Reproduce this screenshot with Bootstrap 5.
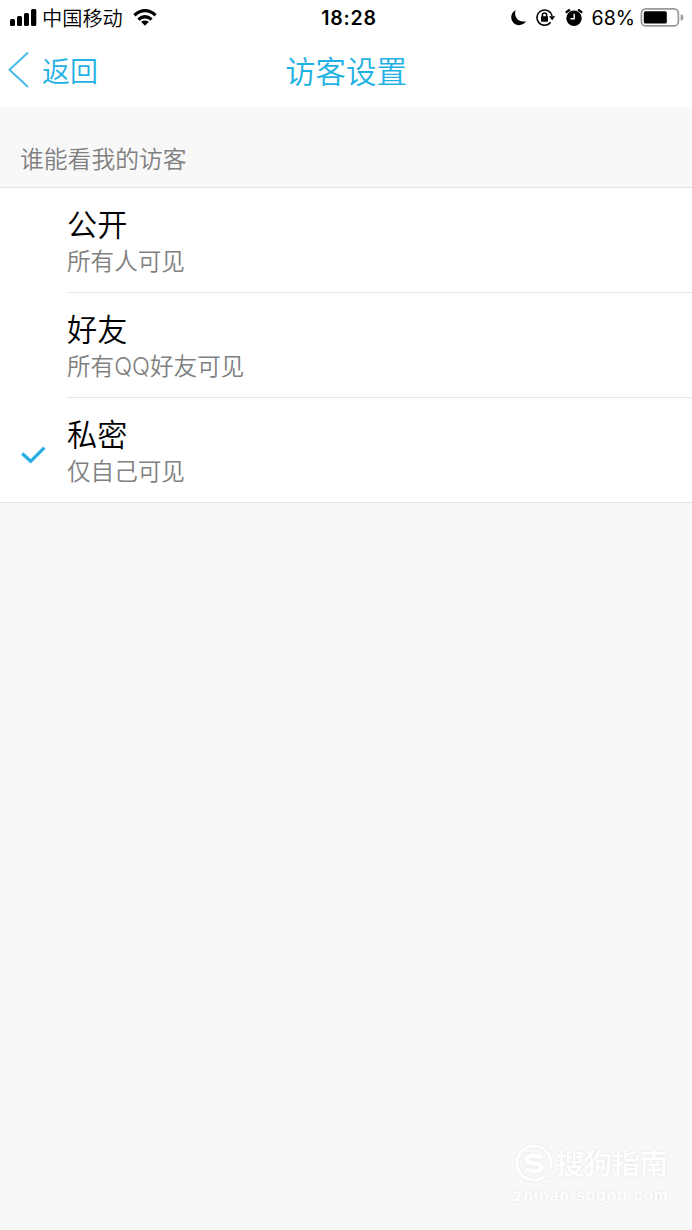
<!DOCTYPE html>
<html lang="zh-CN">
<head>
<meta charset="utf-8">
<meta name="viewport" content="width=device-width, initial-scale=1">
<title>访客设置</title>
<link href="https://cdn.jsdelivr.net/npm/bootstrap@5.3.0/dist/css/bootstrap.min.css" rel="stylesheet">
<style>
body{font-family:Inter,"Noto Sans CJK SC",sans-serif;background:#f8f8f8;color:#000;font-weight:350}
svg{display:block;flex:none}
.app{height:1230px;overflow:hidden}
.status{height:35px;font-size:20px;line-height:35px;font-weight:400}
.side{flex:1 1 0}
.carrier{font-size:20.2px;font-weight:350;margin-left:4px;margin-right:10px;padding-top:1px}
.clock{font-size:19.5px;font-weight:600;letter-spacing:.8px;margin-left:6px;padding-top:1px}
.percent{padding-top:1px;font-size:19.6px;margin-left:5px;margin-right:5px}
.titlebar{height:72px;line-height:72px;color:#1fb1e3}
.back{height:72px;font-size:28px;color:inherit}
.back span,.page-title{padding-top:1px}
.page-title{font-size:30.4px}
.section-label{height:81px;padding:37px 0 0 20px;font-size:23.8px;line-height:32px;color:#808080;border-bottom:1px solid #e2e2e2}
.options{border-bottom:1px solid #e2e2e2}
.option{--bs-list-group-item-padding-x:0;height:105px;color:#000}
.option:last-child{height:104px}
.tick{width:67px;padding-left:21px;padding-top:10px}
.option-text{padding-top:19px;border-bottom:1px solid #e5e5e5}
.option:last-child .option-text{border:0}
.option-name{font-size:30.2px;line-height:36px}
.option-note{font-size:23.6px;line-height:32px;padding-top:3px;color:#808080}
.brand{color:#fff;width:156px;margin-right:22px;margin-bottom:23px;filter:drop-shadow(0 0 1px #e3e3e3)}
.brand-name{font-size:28px;line-height:42px;font-weight:500;margin-left:2px}
.brand-url{font-size:15.5px;line-height:22px;font-weight:600;letter-spacing:1px}
</style>
</head>
<body>
<div class="app d-flex flex-column">
  <header class="bg-white">
    <div class="status d-flex align-items-center text-nowrap">
      <div class="side d-flex align-items-center">
        <svg class="ms-2" width="30" height="20" viewBox="0 0 30 20"><g fill="#000"><rect x="2" y="11" width="5" height="7" rx="1.5"/><rect x="9" y="8" width="5" height="10" rx="1.5"/><rect x="16" y="5" width="5" height="13" rx="1.5"/><rect x="23" y="1" width="5.3" height="17" rx="1.5"/></g></svg>
        <span class="carrier">中国移动</span>
        <svg width="24" height="18" viewBox="0 0 24 18"><g fill="none" stroke="#000" stroke-width="3.2"><path d="M1.4 6.3Q12-2.9 22.6 6.3"/><path d="M5.4 10.5Q12 5 18.6 10.5"/></g><path d="M8.1 12.8Q12 10.2 15.9 12.8L12 16.8Z"/></svg>
      </div>
      <span class="clock">18:28</span>
      <div class="side d-flex align-items-center justify-content-end">
        <svg width="17" height="18" viewBox="0 0 17 18"><path d="M5.6 1.2A7.9 7.9 0 1 0 16 12.2C9.5 14.2 3.2 8.6 5.6 1.2Z"/></svg>
        <svg class="ms-2" width="22" height="20" viewBox="0 0 22 20"><g fill="none" stroke="#000" stroke-width="1.5"><path d="M15.6 14.2A7.6 7.6 0 1 1 17.1 8.4"/><path d="M7.4 9V7.2a2.1 2.1 0 0 1 4.2 0v2"/></g><rect x="6" y="8.3" width="7" height="5.4" rx=".7"/><path d="M14 8.3H20.2L17.1 12.2Z"/></svg>
        <svg class="ms-2 me-1" width="18" height="20" viewBox="0 0 18 20"><circle cx="9" cy="10.2" r="7.7"/><path d="M1.6 4L4.2 2.1M13.8 2.1L16.4 4" fill="none" stroke="#000" stroke-width="2.3" stroke-linecap="round"/><path d="M9.2 5.8v4.9H5.5" fill="none" stroke="#fff" stroke-width="1.4"/></svg>
        <span class="percent">68%</span>
        <svg width="44" height="20" viewBox="0 0 44 20" style="margin-right:8px"><rect x="1.4" y=".9" width="37" height="17" rx="4.5" fill="none" stroke="#999" stroke-width="1.7"/><rect x="3.8" y="3.3" width="23" height="12.2" rx="1.6"/><path d="M40.7 6.3Q43.3 6.7 43.3 9.5T40.7 12.7Z" fill="#999"/></svg>
      </div>
    </div>
    <nav class="titlebar d-flex align-items-center">
      <div class="side"><a href="#" class="back d-flex align-items-center text-decoration-none"><svg width="42" height="40" viewBox="0 0 42 40"><path d="M28 1.5L9.5 18.8L28 36" fill="none" stroke="#48b9e8" stroke-width="2"/></svg><span>返回</span></a></div>
      <span class="page-title">访客设置</span>
      <div class="side"></div>
    </nav>
  </header>
  <main>
    <div class="section-label">谁能看我的访客</div>
    <div class="options list-group list-group-flush bg-white">
      <div class="option list-group-item border-0 d-flex p-0"><div class="tick"></div><div class="option-text flex-grow-1"><div class="option-name">公开</div><div class="option-note">所有人可见</div></div></div>
      <div class="option list-group-item border-0 d-flex p-0"><div class="tick"></div><div class="option-text flex-grow-1"><div class="option-name">好友</div><div class="option-note">所有QQ好友可见</div></div></div>
      <div class="option list-group-item border-0 d-flex p-0"><div class="tick d-flex align-items-center"><svg width="25" height="18" viewBox="0 0 25 18"><path d="M1.2 7.5L9.7 15.3L23.4 1.7" fill="none" stroke="#24ace5" stroke-width="3.2"/></svg></div><div class="option-text flex-grow-1"><div class="option-name">私密</div><div class="option-note">仅自己可见</div></div></div>
    </div>
  </main>
  <footer class="brand mt-auto ms-auto text-nowrap">
    <div class="d-flex align-items-center">
      <svg width="40" height="40" viewBox="0 0 40 40"><g fill="none" stroke="#fff"><path d="M31 32A17 17 0 1 1 35.5 26" stroke-width="2.8"/><path d="M28 13.5Q20 10.5 14.5 13C10.5 15.5 13 19 20 19.3C29 19.8 30 24 25 26.3Q19 28.5 11.5 25.3" stroke-width="4.5"/></g><circle cx="33.5" cy="32" r="1.7" fill="#fff"/></svg>
      <span class="brand-name">搜狗指南</span>
    </div>
    <div class="brand-url">zhinan.sogou.com</div>
  </footer>
</div>
<script src="https://cdn.jsdelivr.net/npm/bootstrap@5.3.0/dist/js/bootstrap.bundle.min.js"></script>
</body>
</html>
